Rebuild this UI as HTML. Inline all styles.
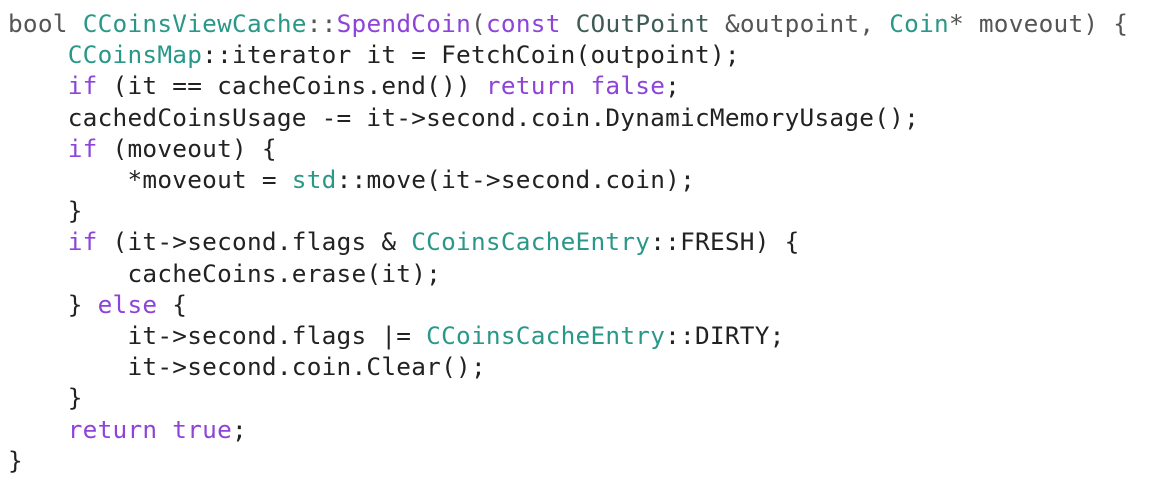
<!DOCTYPE html>
<html><head><style>
html,body{margin:0;padding:0;background:#fff;width:1169px;height:485px;overflow:hidden}
pre{margin:0;position:absolute;left:8px;top:8px;font-family:"DejaVu Sans Mono","Liberation Mono",monospace;font-size:24.4px;line-height:31.2px;color:#222;letter-spacing:0.25px}
.t{color:#2a9888}.p{color:#8e44d8}.g{color:#555}.d{color:#3e5c55}
</style></head><body>
<pre><span class="g">bool</span> <span class="t">CCoinsViewCache</span><span class="g">::</span><span class="p">SpendCoin</span><span class="g">(</span><span class="p">const</span> <span class="d">COutPoint</span> <span class="g">&amp;outpoint,</span> <span class="t">Coin</span><span class="g">* moveout) {</span>
    <span class="t">CCoinsMap</span>::iterator it = FetchCoin(outpoint);
    <span class="p">if</span> (it == cacheCoins.end()) <span class="p">return</span> <span class="p">false</span>;
    cachedCoinsUsage -= it-&gt;second.coin.DynamicMemoryUsage();
    <span class="p">if</span> (moveout) {
        *moveout = <span class="t">std</span>::move(it-&gt;second.coin);
    }
    <span class="p">if</span> (it-&gt;second.flags &amp; <span class="t">CCoinsCacheEntry</span>::FRESH) {
        cacheCoins.erase(it);
    } <span class="p">else</span> {
        it-&gt;second.flags |= <span class="t">CCoinsCacheEntry</span>::DIRTY;
        it-&gt;second.coin.Clear();
    }
    <span class="p">return</span> <span class="p">true</span>;
}</pre>
</body></html>
